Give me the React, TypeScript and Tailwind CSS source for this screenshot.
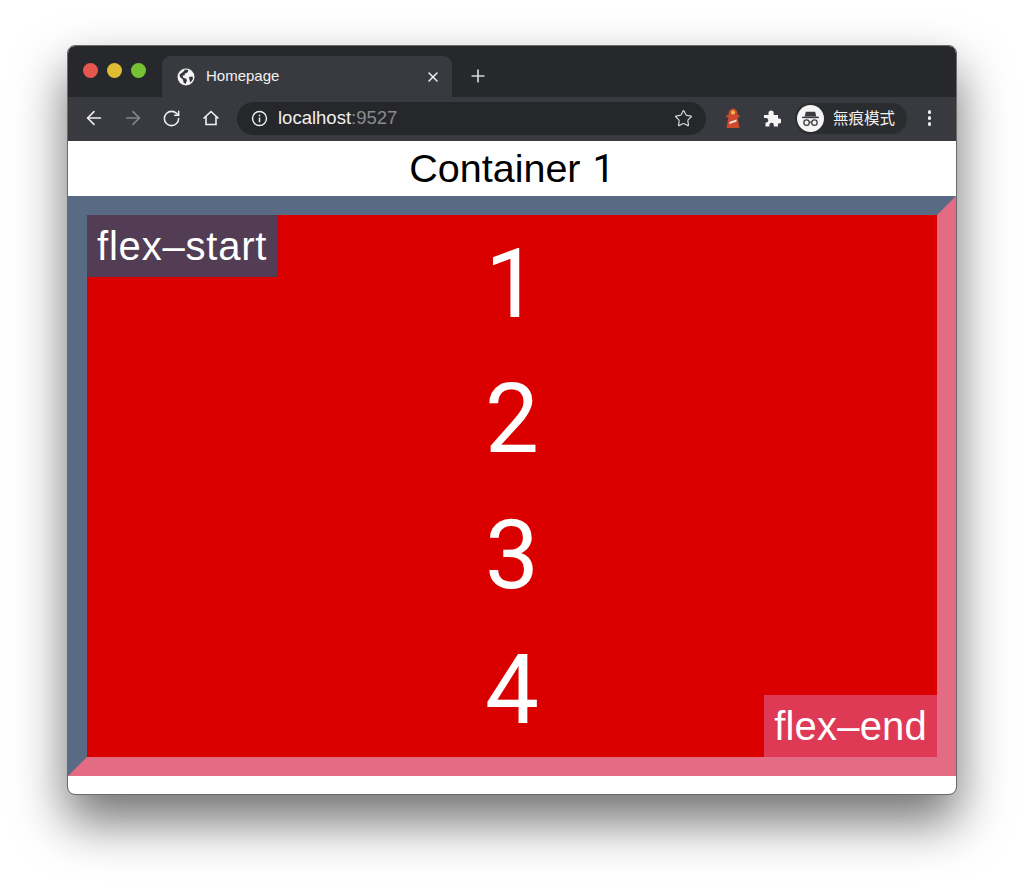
import { ArrowLeft, ArrowRight, Plus, RotateCw, Star, X } from 'lucide-react';

const sans = "font-['Liberation_Sans',Arial,sans-serif]";

function GlobeIcon() {
  return (
    <svg viewBox="0 0 18 18" className="w-[18px] h-[18px] shrink-0">
      <circle cx="9" cy="9" r="8.5" fill="#f4f4f5" />
      <path
        d="M2.5 6.5 L6 4 L8 1.5 L11.5 2 L10.5 4.5 L8 5.5 L7.5 7.5 L5.5 7.5 L6.5 10 L9 10.5 L10 12.5 L8.5 16 L6.5 14.5 L6 11.5 L3 9Z M12 9 L15.5 8.5 L16 11 L13.5 14.5 L12.5 12Z"
        fill="#35363a"
      />
    </svg>
  );
}

function HomeIcon() {
  return (
    <svg viewBox="0 0 18 18" className="w-[18px] h-[18px]" fill="none" stroke="#f1f1f2" strokeWidth="1.6" strokeLinejoin="miter">
      <path d="M1.5 9.5 L9 2.5 L16.5 9.5 M4 7.5 V15.5 H14 V7.5" />
    </svg>
  );
}

function InfoIcon() {
  return (
    <svg viewBox="0 0 18 18" className="w-[17px] h-[17px] shrink-0" fill="none">
      <circle cx="9" cy="9" r="7.4" stroke="#f1f1f2" strokeWidth="1.5" />
      <rect x="8.2" y="8" width="1.6" height="5" fill="#f1f1f2" />
      <rect x="8.2" y="5" width="1.6" height="1.7" fill="#f1f1f2" />
    </svg>
  );
}

function LighthouseIcon() {
  return (
    <svg viewBox="0 0 14 20" className="w-[14px] h-[20px]">
      <path d="M2.5 6 A4.5 5.5 0 0 1 11.5 6 V7.5 H2.5Z" fill="#cf4a2b" />
      <circle cx="7" cy="4.6" r="2" fill="#edc24d" />
      <rect x="0.5" y="7" width="13" height="2.4" fill="#cf4a2b" />
      <path d="M2.5 9 H11.5 L13.5 20 H0.5Z" fill="#cf4a2b" />
      <path d="M3.5 14 L10.5 11.5 V13.5 L3.5 16Z" fill="#f5e6df" />
    </svg>
  );
}

function PuzzleIcon() {
  return (
    <svg viewBox="0 0 18 18" className="w-[18px] h-[18px]" fill="#f4f4f5">
      <path d="M1 6 H5.5 V4 A2.6 2.6 0 0 1 10.7 4 V6 H15 V9.5 H16 A2.5 2.5 0 0 1 16 14.5 H15 V17.5 H10.8 V16 A2.2 2.2 0 0 0 6.4 16 V17.5 H2.5 V13.5 H3.5 A2.3 2.3 0 0 0 3.5 9 H1Z" />
    </svg>
  );
}

function IncognitoIcon() {
  return (
    <svg viewBox="0 0 26 26" className="w-[27px] h-[27px] shrink-0">
      <circle cx="13" cy="13" r="13" fill="#f4f4f5" />
      <path d="M8.5 6.5 H17.5 L18.6 11 H7.4Z" fill="#3a3b3f" />
      <rect x="5" y="11.2" width="16" height="1.5" fill="#3a3b3f" />
      <g fill="none" stroke="#3a3b3f" strokeWidth="1.2">
        <circle cx="9.2" cy="17" r="2.6" />
        <circle cx="16.8" cy="17" r="2.6" />
        <path d="M11.8 16.6 H14.2" />
      </g>
    </svg>
  );
}

function TitleBar() {
  return (
    <div className="h-[51px] pt-[10px] pl-[15px] bg-[#27282c] rounded-t-[7px] flex items-start">
      <div className="w-[79px] h-[32px] flex items-center gap-[9px] pb-[4px]">
        <span className="w-[15px] h-[15px] rounded-full bg-[#e5584f]" />
        <span className="w-[15px] h-[15px] rounded-full bg-[#e0bc34]" />
        <span className="w-[15px] h-[15px] rounded-full bg-[#76c234]" />
      </div>
      <div className="w-[290px] h-[41px] bg-[#393a3f] rounded-t-[9px] flex items-center pl-[15px] pr-[11px]">
        <GlobeIcon />
        <span className={`${sans} ml-[11px] flex-1 text-[15px] text-[#f1f1f2]`}>Homepage</span>
        <X className="w-[16px] h-[16px] text-[#f1f1f2]" strokeWidth={2.2} />
      </div>
      <Plus className="w-[20px] h-[20px] ml-[16px] mt-[10px] text-[#d8d8da]" strokeWidth={2} />
    </div>
  );
}

function Toolbar() {
  const buttonClass = 'w-[39px] h-full flex items-center justify-center shrink-0';
  return (
    <div className="h-[44px] bg-[#393a3f] flex items-center pl-[6px] pb-[2px]">
      <div className={buttonClass}>
        <ArrowLeft className="w-[22px] h-[22px] text-[#f1f1f2]" strokeWidth={1.7} />
      </div>
      <div className={buttonClass}>
        <ArrowRight className="w-[22px] h-[22px] text-[#85868a]" strokeWidth={1.7} />
      </div>
      <div className={buttonClass}>
        <RotateCw className="w-[19px] h-[19px] text-[#f1f1f2]" strokeWidth={1.9} />
      </div>
      <div className={buttonClass}>
        <HomeIcon />
      </div>
      <div className="w-[469px] h-[33px] ml-[7px] rounded-full bg-[#26272b] flex items-center pl-[14px] pr-[13px]">
        <InfoIcon />
        <span className={`${sans} ml-[10px] flex-1 text-[18.5px] text-[#f1f1f2]`}>
          localhost<span className="text-[#8a8b8e]">:9527</span>
        </span>
        <Star className="w-[19px] h-[19px] text-[#d6d6d8]" strokeWidth={1.5} />
      </div>
      <div className="w-[39px] ml-[7px] flex justify-center">
        <LighthouseIcon />
      </div>
      <div className="w-[39px] flex justify-center">
        <PuzzleIcon />
      </div>
      <div className="w-[112px] h-[31px] ml-[4px] rounded-full bg-[#2b2c30] flex items-center pl-[2px]">
        <IncognitoIcon />
        <span className="ml-[9px] text-[15.5px] text-[#f1f1f2] font-['Noto_Sans_CJK_TC',sans-serif]">無痕模式</span>
      </div>
      <div className="flex-1 flex flex-col items-center gap-[2.5px] pr-[4px]">
        <span className="w-[3.5px] h-[3.5px] rounded-full bg-[#f1f1f2]" />
        <span className="w-[3.5px] h-[3.5px] rounded-full bg-[#f1f1f2]" />
        <span className="w-[3.5px] h-[3.5px] rounded-full bg-[#f1f1f2]" />
      </div>
    </div>
  );
}

export default function App() {
  const items = ['1', '2', '3', '4'];

  return (
    <div className={`${sans} w-[1024px] h-[884px] bg-white pt-[46px] pl-[68px] overflow-hidden`}>
      <div className="w-[888px] h-[748px] rounded-[7px] bg-white shadow-[0_26px_50px_2px_rgba(0,0,0,0.55)] outline outline-1 outline-[#6b6b6e] flex flex-col">
        <TitleBar />
        <Toolbar />
        <h1 className="h-[55px] flex items-center justify-center text-[39.5px] font-normal text-black">
          Container <span className="ml-[12px] font-['Roboto',sans-serif]">1</span>
        </h1>
        <div className="h-[580px] border-[19px] border-t-[#586a84] border-l-[#586a84] border-r-[#e46b84] border-b-[#e46b84]">
          <div className="relative h-full bg-[#da0000] flex flex-col text-white">
            {items.map((item) => (
              <div key={item} className="flex-1 pt-[2px] flex items-center justify-center font-['Roboto',sans-serif] text-[96px] leading-none">
                {item}
              </div>
            ))}
            <div className="absolute top-0 left-0 h-[62px] px-[10px] flex items-center bg-[#523d55] text-[40px] tracking-[0.8px]">
              flex–start
            </div>
            <div className="absolute bottom-0 right-0 h-[62px] px-[10px] flex items-center bg-[#de3a55] text-[40px] tracking-[0.2px]">
              flex–end
            </div>
          </div>
        </div>
      </div>
    </div>
  );
}
